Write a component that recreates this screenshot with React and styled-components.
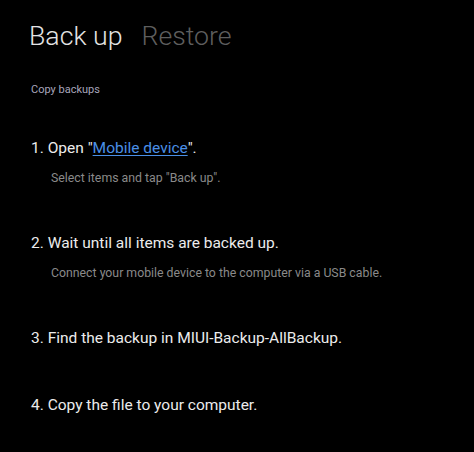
import React from 'react';
import styled, { createGlobalStyle } from 'styled-components';

const steps = [
  { id: 1, before: '1. Open "', link: 'Mobile device', after: '".', note: 'Select items and tap "Back up".' },
  { id: 2, before: '2. Wait until all items are backed up.', note: 'Connect your mobile device to the computer via a USB cable.' },
  { id: 3, before: '3. Find the backup in MIUI-Backup-AllBackup.' },
  { id: 4, before: '4. Copy the file to your computer.' },
];

const App = () => {
  return (
    <Page>
      <GlobalStyle />
      <Tabs>
        <Tab active>Back up</Tab>
        <Tab>Restore</Tab>
      </Tabs>
      <Section>Copy backups</Section>
      <StepList>
        {steps.map(step => (
          <Step key={step.id}>
            <StepTitle>
              {step.before}
              {step.link && <Link href="#">{step.link}</Link>}
              {step.after}
            </StepTitle>
            {step.note && <StepNote>{step.note}</StepNote>}
          </Step>
        ))}
      </StepList>
    </Page>
  );
};

const GlobalStyle = createGlobalStyle`
  html, body {
    margin: 0;
    background: #000;
  }
  body {
    font-family: Roboto, "Noto Sans", sans-serif;
  }
`;

const Page = styled.div`
  width: 474px;
  height: 452px;
  overflow: hidden;
  background: #000;
  padding: 19px 0 0 29px;
  box-sizing: border-box;
`;

const Tabs = styled.div`
  display: flex;
  gap: 19px;
`;

const Tab = styled.div`
  font-size: 26.7px;
  font-weight: 300;
  line-height: 34px;
  color: ${props => (props.active ? '#e4e4e4' : '#5e5e5e')};
`;

const Section = styled.div`
  margin: 29px 0 0 2px;
  font-size: 11px;
  line-height: 16px;
  color: #a7a5bb;
`;

const StepList = styled.div`
  display: flex;
  flex-direction: column;
  gap: 45px;
  margin: 39px 0 0 2px;
`;

const Step = styled.div`
  display: flex;
  flex-direction: column;
  gap: 10px;
`;

const StepTitle = styled.div`
  font-size: 15.5px;
  line-height: 22px;
  color: #ececec;
`;

const Link = styled.a`
  color: #4a8fe6;
  text-decoration: underline;
  text-underline-offset: 2px;
`;

const StepNote = styled.div`
  padding-left: 20px;
  font-size: 12.3px;
  line-height: 18px;
  color: #8a8a8a;
`;

export default App;
